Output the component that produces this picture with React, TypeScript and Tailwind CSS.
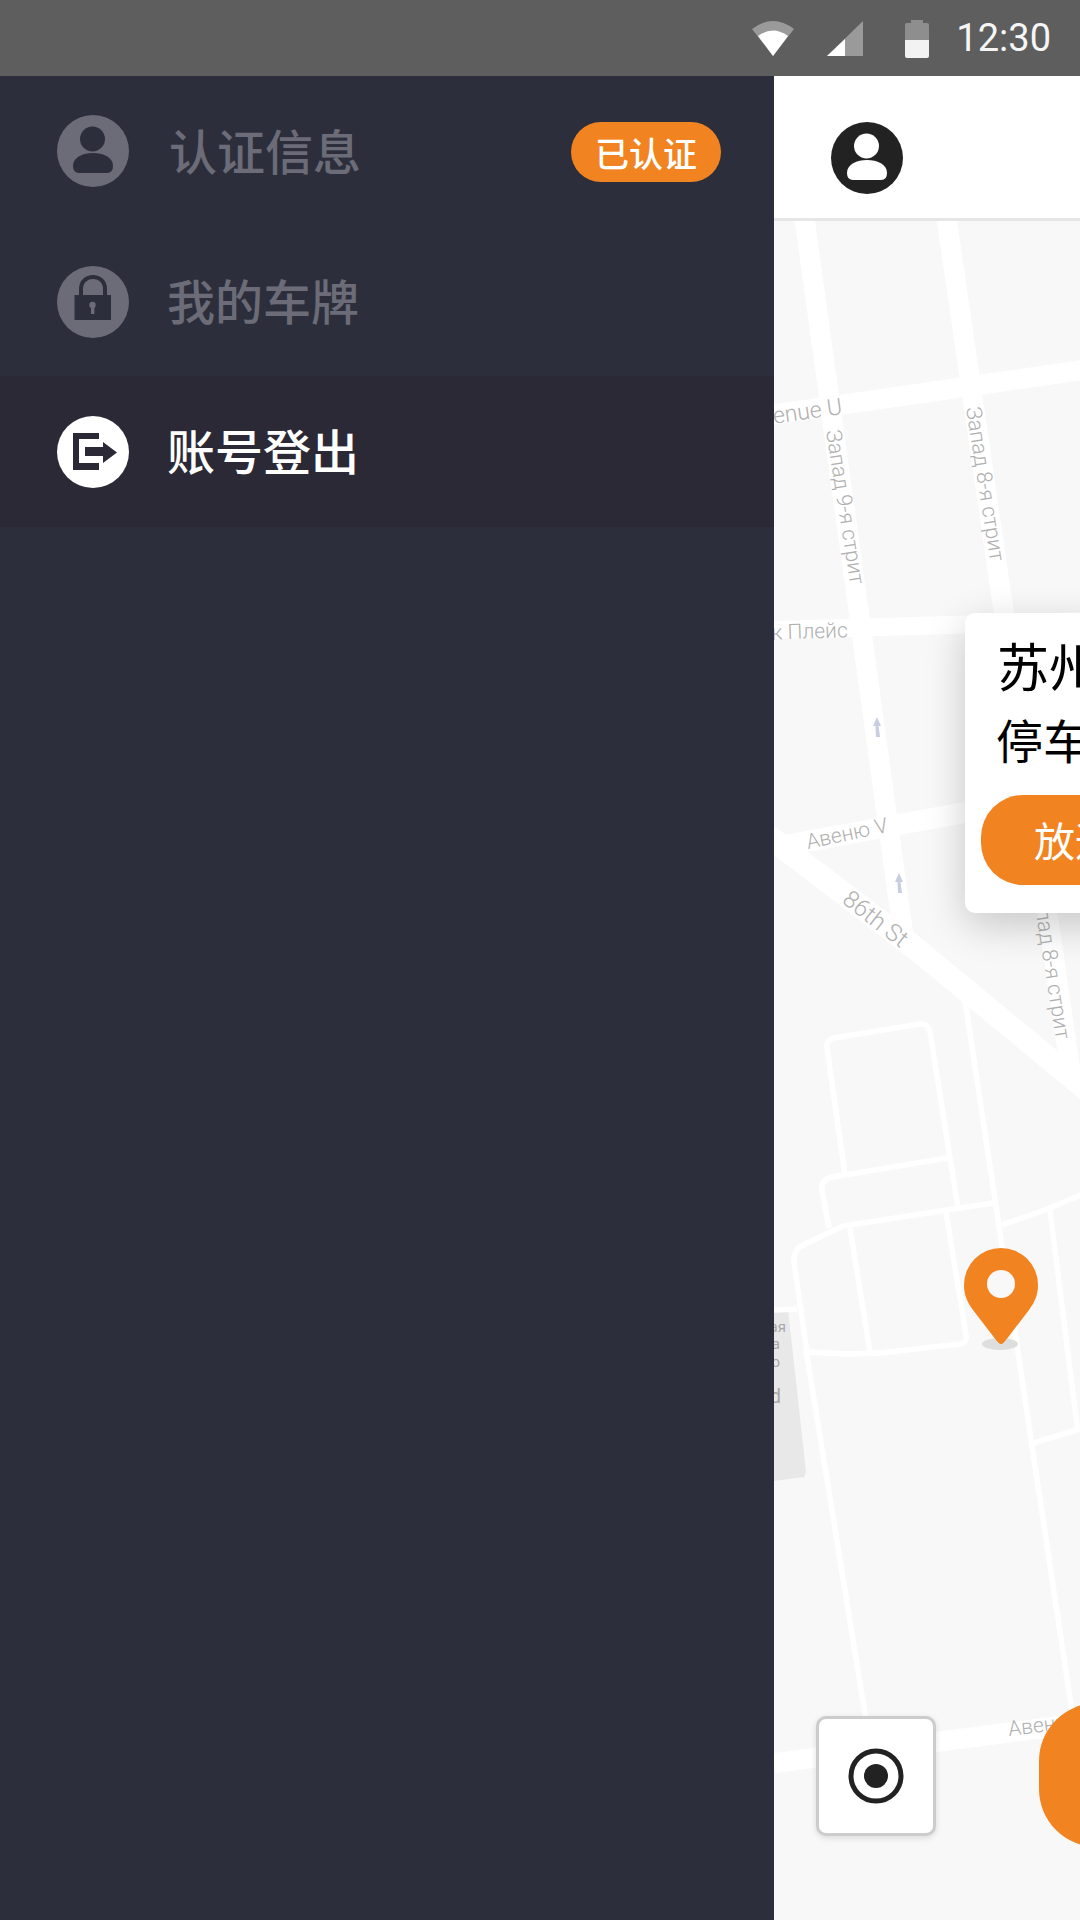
const font = { fontFamily: '"Noto Sans CJK SC", "Noto Sans", sans-serif' };

function UserIcon({ bg, fg }: { bg: string; fg: string }) {
  return (
    <svg width="72" height="72" viewBox="0 0 72 72" className="shrink-0">
      <circle cx="36" cy="36" r="36" fill={bg} />
      <circle cx="35.5" cy="24" r="12.5" fill={fg} />
      <path d="M16 51C16 42 26 38 36 38C46 38 56 42 56 51Q56 58 50 58H22Q16 58 16 51Z" fill={fg} />
    </svg>
  );
}

function LockIcon() {
  return (
    <svg width="72" height="72" viewBox="0 0 72 72" className="shrink-0">
      <circle cx="36" cy="36" r="36" fill="#6b6c78" />
      <path d="M24 30V23C24 7 48 7 48 23V30" fill="none" stroke="#2c2f3b" strokeWidth="4" />
      <rect x="17.5" y="29" width="36.5" height="25" fill="#2c2f3b" />
      <circle cx="35.5" cy="39" r="3.2" fill="#6b6c78" />
      <rect x="34" y="40" width="3.4" height="8" fill="#6b6c78" />
    </svg>
  );
}

function LogoutIcon() {
  return (
    <svg width="72" height="72" viewBox="0 0 72 72" className="shrink-0">
      <circle cx="36" cy="36" r="36" fill="#ffffff" />
      <path d="M16 17H42V23H22V47H42V54H16Z" fill="#2b2936" />
      <path d="M28 31H46V26L60 36.5L46 47V40H28Z" fill="#2b2936" />
    </svg>
  );
}

function MapDrawing() {
  const label = { fontFamily: 'Roboto, sans-serif', fill: '#b0b0b0', fontWeight: 300 };
  return (
    <svg className="absolute inset-0 w-full h-full" viewBox="774 221 306 1699">
      <rect x="774" y="221" width="306" height="1699" fill="#f8f8f8" />
      <polygon points="774,1310 788,1309 806,1472 804,1477 774,1481" fill="#e8e8e8" />
      <g stroke="#ffffff" fill="none" strokeLinecap="butt" strokeLinejoin="round">
        <path d="M804 215L904 940" strokeWidth="20" />
        <path d="M946 215L1071 1075" strokeWidth="20" />
        <path d="M770 415L1090 369" strokeWidth="20" />
        <path d="M770 630L1090 621" strokeWidth="18" />
        <path d="M782 846L1000 806" strokeWidth="21" />
        <path d="M768 836L915 948L1092 1094" strokeWidth="23" />
        <path d="M774 1763L1090 1722" strokeWidth="20" />
        <g strokeWidth="5.5">
          <path d="M965 1000L1077 1745" />
          <path d="M845 1175L832 1177Q821 1179 822 1190L829 1228" />
          <path d="M845 1175L827 1048Q826 1040 834 1038L920 1024Q928 1023 930 1032L958 1208" />
          <path d="M845 1175L947 1158" />
          <path d="M774 1310L797 1309" />
          <path d="M807 1352L794 1262Q793 1250 803 1245L843 1226L993 1203" />
          <path d="M1002 1225L1045 1210L1090 1191" />
          <path d="M850 1228L870 1352" />
          <path d="M946 1212L966 1335Q968 1342 960 1344L880 1353Q850 1355 807 1352" />
          <path d="M1050 1210L1077 1425Q1078 1430 1070 1432L1034 1443" />
          <path d="M1070 1432L1090 1426" />
          <path d="M806 1350L866 1720" />
        </g>
      </g>
      <text x="843" y="414" textAnchor="end" fontSize="23" transform="rotate(-8 843 414)" style={label}>Avenue U</text>
      <text x="826" y="431" fontSize="21.5" transform="rotate(81 826 431)" style={label}>Запад 9-я стрит</text>
      <text x="966" y="408" fontSize="21.5" transform="rotate(81 966 408)" style={label}>Запад 8-я стрит</text>
      <text x="848" y="637" textAnchor="end" fontSize="21" transform="rotate(-2 848 637)" style={label}>к Плейс</text>
      <text x="808" y="849" fontSize="21" transform="rotate(-12 808 849)" style={label}>Авеню V</text>
      <text x="841" y="902" fontSize="24" transform="rotate(38 841 902)" style={label}>86th St</text>
      <text x="1056" y="1040" textAnchor="end" fontSize="21.5" transform="rotate(81 1056 1040)" style={label}>Запад 8-я стрит</text>
      <text x="1009" y="1736" fontSize="21" transform="rotate(-7 1009 1736)" style={label}>Авеню</text>
      <g fill="#a9a9a9" fontSize="15" fontFamily="Roboto, sans-serif" textAnchor="end">
        <text x="786" y="1332">ая</text>
        <text x="780" y="1349">а</text>
        <text x="780" y="1367">о</text>
        <text x="781" y="1403" fontSize="20">d</text>
      </g>
      <path d="M877 717L881 726H878.5L880 737H876L875.5 726H873Z" fill="#c9cde0" />
      <path d="M899 873L903 882H900.5L902 893H898L897.5 882H895Z" fill="#c9cde0" />
      <ellipse cx="1000" cy="1344" rx="18" ry="6" fill="#dedede" />
      <path d="M1001 1344C1003 1344 1004 1342 1006 1340L1029 1310C1034 1303 1038 1296 1038 1285A37 37 0 0 0 964 1285C964 1296 968 1303 973 1310L996 1340C998 1342 999 1344 1001 1344Z" fill="#f18420" />
      <circle cx="1001" cy="1284" r="14" fill="#f8f8f8" />
    </svg>
  );
}

export default function App() {
  return (
    <div className="w-[1080px] h-[1920px] flex flex-col overflow-hidden" style={font}>
      <div className="h-[76px] bg-[#5e5e5e] flex items-center justify-end shrink-0 relative">
        <svg width="130" height="50" viewBox="750 10 130 50" className="mr-[26px] mb-[1px]">
          <path d="M753 26Q774 10 795 26L774 53Z" fill="#9a9a9a" />
          <path d="M759 33Q774 22 789 33L774 53Z" fill="#ffffff" />
          <path d="M864 18V53H828Z" fill="#9a9a9a" />
          <path d="M846 36V53H828Z" fill="#ffffff" />
        </svg>
        <svg width="24" height="38" viewBox="906 15 24 38" className="mr-[27px] mb-[-1px]">
          <path d="M912 15H924V18H928Q930 18 930 20V35H906V20Q906 18 908 18H912Z" fill="#8e8e8e" />
          <path d="M906 35H930V51Q930 53 928 53H908Q906 53 906 51Z" fill="#f2f2f2" />
        </svg>
        <span className="text-[38px] text-[#f5f5f5] leading-none mr-[29px]" style={{ fontFamily: 'Roboto, sans-serif' }}>12:30</span>
      </div>
      <div className="flex-1 flex min-h-0">
        <div className="w-[774px] bg-[#2c2f3b] shrink-0">
          <div className="h-[150px] flex items-center pl-[57px] pr-[53px] gap-[40px]">
            <UserIcon bg="#6b6c78" fg="#2c2f3b" />
            <span className="text-[48px] font-medium text-[#6b6c78] leading-none flex-1 mb-[5px]">认证信息</span>
            <span className="h-[60px] w-[150px] mt-[2px] bg-[#f18420] rounded-full text-white text-[34px] font-medium flex items-center justify-center">已认证</span>
          </div>
          <div className="h-[150px] flex items-center pl-[57px] gap-[38px] pt-[1px]">
            <LockIcon />
            <span className="text-[48px] font-medium text-[#6b6c78] leading-none mb-[5px]">我的车牌</span>
          </div>
          <div className="h-[151px] flex items-center pl-[57px] gap-[38px] bg-[#2b2936]">
            <LogoutIcon />
            <span className="text-[48px] font-medium text-white leading-none mb-[5px]">账号登出</span>
          </div>
        </div>
        <div className="flex-1 flex flex-col relative overflow-hidden min-w-0">
          <div className="h-[145px] bg-white border-b-[3px] border-[#e6e6e6] shrink-0 flex items-center pl-[57px] pt-[22px]">
            <UserIcon bg="#222222" fg="#ffffff" />
          </div>
          <div className="flex-1 relative">
            <MapDrawing />
            <div className="absolute left-[191px] top-[392px] w-[400px] h-[300px] bg-white rounded-[10px] shadow-[0_12px_40px_rgba(0,0,0,0.2)] pl-[16px]">
              <div className="text-[52px] text-black leading-none pl-[16px] pt-[26px] whitespace-nowrap">苏州市</div>
              <div className="text-[47px] text-black leading-none pl-[15px] pt-[24px] whitespace-nowrap">停车场</div>
              <div className="mt-[33px] h-[90px] rounded-[42px] bg-[#f18420] text-white text-[41px] flex items-center pl-[53px] whitespace-nowrap">放通</div>
            </div>
            <div className="absolute left-[42px] top-[1495px] w-[120px] h-[120px] bg-white border-[3px] border-[#cccccc] rounded-[10px] shadow-[0_2px_6px_rgba(0,0,0,0.12)] flex items-center justify-center">
              <svg width="56" height="56" viewBox="0 0 56 56">
                <circle cx="28" cy="28" r="25" fill="none" stroke="#222222" strokeWidth="5" />
                <circle cx="28" cy="28" r="12" fill="#222222" />
              </svg>
            </div>
            <div className="absolute left-[265px] top-[1482px] w-[200px] h-[144px] bg-[#f18420] rounded-[58px]" />
          </div>
        </div>
      </div>
    </div>
  );
}
